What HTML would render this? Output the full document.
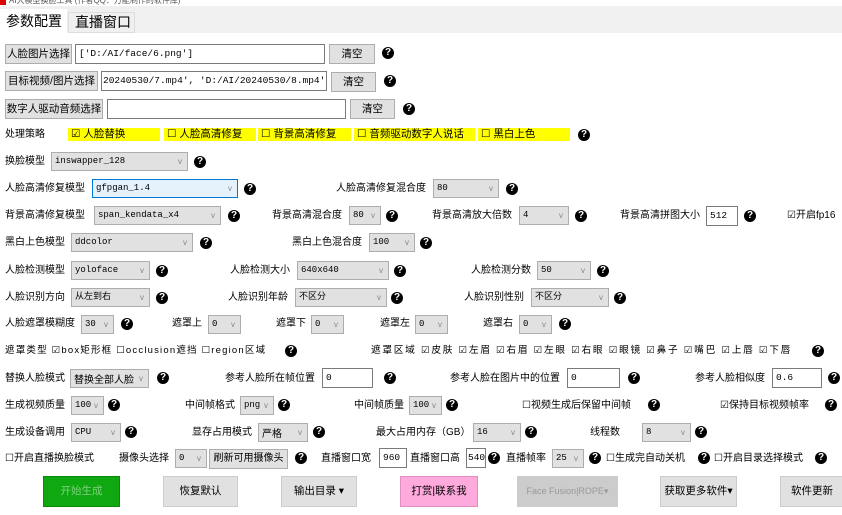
<!DOCTYPE html>
<html><head><meta charset="utf-8"><style>
*{margin:0;padding:0;box-sizing:border-box}
body{width:842px;height:515px;overflow:hidden;background:#fff;position:relative;font-family:"Liberation Sans","Noto Sans CJK SC",sans-serif;font-size:10px;color:#000}
div,span{position:absolute;white-space:nowrap}
.l{line-height:14px;font-size:10px}
.c{height:19px;background:#e1e1e1;border:1px solid #adadad;font-family:"Liberation Mono","Noto Sans CJK SC",monospace;font-size:9px;line-height:17px;padding-left:3px}
.c:after{content:"v";position:absolute;right:5px;top:0;color:#888;font-size:8px;font-family:"Liberation Sans",sans-serif}
.i{height:20px;background:#fff;border:1px solid #7a7a7a;font-family:"Liberation Mono","Noto Sans CJK SC",monospace;font-size:9.5px;line-height:18px;padding-left:3px;overflow:hidden}
.b{height:20px;background:#e1e1e1;border:1px solid #adadad;text-align:center;line-height:18px;font-size:10.5px}
.q{width:12px;height:12px;border-radius:50%;background:#000;color:#fff;font-weight:bold;font-size:10px;line-height:12px;text-align:center}
.y{background:#ff0;height:13px;top:128px;line-height:13px;padding-left:3px;font-size:10.5px}
.B{top:476px;height:31px;background:#e1e1e1;border:1px solid #ccc;text-align:center;line-height:29px;font-size:10.5px}
</style></head><body>
<div style="left:0;top:0;width:842px;height:6px;background:#fff;font-size:8px;line-height:6px;color:#555;overflow:hidden"><span style="left:0;top:0;width:6px;height:5px;background:#d00"></span><span style="left:9px;top:-2px">AI大模型换脸工具 (作者QQ：万能制作的软件库)</span></div>
<div style="left:0;top:6px;width:842px;height:27px;background:#f0f0f0"></div>
<div style="left:0;top:9px;width:67px;height:25px;background:#fff;font-size:14px;line-height:24px;padding-left:6px">参数配置</div>
<div style="left:68px;top:12px;width:67px;height:21px;border:1px solid #ddd;background:#f0f0f0;font-size:14px;line-height:19px;padding-left:6px">直播窗口</div>

<div class="b" style="left:5px;top:44px;width:67px">人脸图片选择</div>
<div class="i" style="left:75px;top:44px;width:250px">['D:/AI/face/6.png']</div>
<div class="b" style="left:329px;top:44px;width:46px">清空</div>
<div class="q" style="left:382px;top:47px">?</div>

<div class="b" style="left:5px;top:71px;width:93px">目标视频/图片选择</div>
<div class="i" style="left:101px;top:71px;width:226px;padding-left:1px">20240530/7.mp4', 'D:/AI/20240530/8.mp4']</div>
<div class="b" style="left:331px;top:72px;width:45px">清空</div>
<div class="q" style="left:384px;top:75px">?</div>

<div class="b" style="left:5px;top:99px;width:98px">数字人驱动音频选择</div>
<div class="i" style="left:107px;top:99px;width:239px"></div>
<div class="b" style="left:350px;top:99px;width:45px">清空</div>
<div class="q" style="left:403px;top:103px">?</div>

<div class="l" style="left:5px;top:128px">处理策略</div>
<div class="y" style="left:68px;width:92px">☑ 人脸替换</div>
<div class="y" style="left:164px;width:92px">☐ 人脸高清修复</div>
<div class="y" style="left:258px;width:93px">☐ 背景高清修复</div>
<div class="y" style="left:354px;width:121px">☐ 音频驱动数字人说话</div>
<div class="y" style="left:478px;width:92px">☐ 黑白上色</div>
<div class="q" style="left:578px;top:129px">?</div>

<div class="l" style="left:5px;top:155px">换脸模型</div>
<div class="c" style="left:51px;top:152px;width:137px">inswapper_128</div>
<div class="q" style="left:194px;top:156px">?</div>

<div class="l" style="left:5px;top:182px">人脸高清修复模型</div>
<div class="c" style="left:92px;top:179px;width:146px;background:#e5f1fb;border-color:#0078d7">gfpgan_1.4</div>
<div class="q" style="left:244px;top:183px">?</div>
<div class="l" style="left:336px;top:182px">人脸高清修复混合度</div>
<div class="c" style="left:433px;top:179px;width:66px">80</div>
<div class="q" style="left:506px;top:183px">?</div>

<div class="l" style="left:5px;top:209px">背景高清修复模型</div>
<div class="c" style="left:94px;top:206px;width:127px">span_kendata_x4</div>
<div class="q" style="left:228px;top:210px">?</div>
<div class="l" style="left:272px;top:209px">背景高清混合度</div>
<div class="c" style="left:349px;top:206px;width:32px">80</div>
<div class="q" style="left:386px;top:210px">?</div>
<div class="l" style="left:432px;top:209px">背景高清放大倍数</div>
<div class="c" style="left:519px;top:206px;width:50px">4</div>
<div class="q" style="left:575px;top:210px">?</div>
<div class="l" style="left:620px;top:209px">背景高清拼图大小</div>
<div class="i" style="left:706px;top:206px;width:32px">512</div>
<div class="q" style="left:744px;top:210px">?</div>
<div class="l" style="left:787px;top:209px">☑开启fp16</div>

<div class="l" style="left:5px;top:236px">黑白上色模型</div>
<div class="c" style="left:71px;top:233px;width:122px">ddcolor</div>
<div class="q" style="left:200px;top:237px">?</div>
<div class="l" style="left:292px;top:236px">黑白上色混合度</div>
<div class="c" style="left:369px;top:233px;width:46px">100</div>
<div class="q" style="left:420px;top:237px">?</div>

<div class="l" style="left:5px;top:264px">人脸检测模型</div>
<div class="c" style="left:71px;top:261px;width:79px">yoloface</div>
<div class="q" style="left:156px;top:265px">?</div>
<div class="l" style="left:230px;top:264px">人脸检测大小</div>
<div class="c" style="left:297px;top:261px;width:92px">640x640</div>
<div class="q" style="left:394px;top:265px">?</div>
<div class="l" style="left:471px;top:264px">人脸检测分数</div>
<div class="c" style="left:537px;top:261px;width:54px">50</div>
<div class="q" style="left:597px;top:265px">?</div>

<div class="l" style="left:5px;top:291px">人脸识别方向</div>
<div class="c" style="left:71px;top:288px;width:79px">从左到右</div>
<div class="q" style="left:156px;top:292px">?</div>
<div class="l" style="left:228px;top:291px">人脸识别年龄</div>
<div class="c" style="left:295px;top:288px;width:92px">不区分</div>
<div class="q" style="left:391px;top:292px">?</div>
<div class="l" style="left:464px;top:291px">人脸识别性别</div>
<div class="c" style="left:531px;top:288px;width:78px">不区分</div>
<div class="q" style="left:614px;top:292px">?</div>

<div class="l" style="left:5px;top:317px">人脸遮罩模糊度</div>
<div class="c" style="left:81px;top:315px;width:33px">30</div>
<div class="q" style="left:121px;top:318px">?</div>
<div class="l" style="left:172px;top:317px">遮罩上</div>
<div class="c" style="left:208px;top:315px;width:33px">0</div>
<div class="l" style="left:276px;top:317px">遮罩下</div>
<div class="c" style="left:311px;top:315px;width:33px">0</div>
<div class="l" style="left:380px;top:317px">遮罩左</div>
<div class="c" style="left:415px;top:315px;width:33px">0</div>
<div class="l" style="left:483px;top:317px">遮罩右</div>
<div class="c" style="left:519px;top:315px;width:33px">0</div>
<div class="q" style="left:559px;top:318px">?</div>

<div class="l" style="left:5px;top:344px;font-size:9.5px;letter-spacing:1.2px">遮罩类型 ☑box矩形框 ☐occlusion遮挡 ☐region区域</div>
<div class="q" style="left:285px;top:345px">?</div>
<div class="l" style="left:371px;top:344px;font-size:9.7px;letter-spacing:1.7px">遮罩区域 ☑皮肤 ☑左眉 ☑右眉 ☑左眼 ☑右眼 ☑眼镜 ☑鼻子 ☑嘴巴 ☑上唇 ☑下唇</div>
<div class="q" style="left:812px;top:345px">?</div>

<div class="l" style="left:5px;top:372px">替换人脸模式</div>
<div class="c" style="left:70px;top:369px;width:79px;font-family:'Noto Sans CJK SC',sans-serif;font-size:10px">替换全部人脸</div>
<div class="q" style="left:157px;top:372px">?</div>
<div class="l" style="left:225px;top:372px">参考人脸所在帧位置</div>
<div class="i" style="left:322px;top:368px;width:51px">0</div>
<div class="q" style="left:384px;top:372px">?</div>
<div class="l" style="left:450px;top:372px">参考人脸在图片中的位置</div>
<div class="i" style="left:567px;top:368px;width:53px">0</div>
<div class="q" style="left:628px;top:372px">?</div>
<div class="l" style="left:695px;top:372px">参考人脸相似度</div>
<div class="i" style="left:772px;top:368px;width:50px">0.6</div>
<div class="q" style="left:828px;top:372px">?</div>

<div class="l" style="left:5px;top:399px">生成视频质量</div>
<div class="c" style="left:71px;top:396px;width:33px">100</div>
<div class="q" style="left:108px;top:399px">?</div>
<div class="l" style="left:185px;top:399px">中间帧格式</div>
<div class="c" style="left:240px;top:396px;width:34px">png</div>
<div class="q" style="left:278px;top:399px">?</div>
<div class="l" style="left:354px;top:399px">中间帧质量</div>
<div class="c" style="left:409px;top:396px;width:33px">100</div>
<div class="q" style="left:446px;top:399px">?</div>
<div class="l" style="left:522px;top:399px">☐视频生成后保留中间帧</div>
<div class="q" style="left:648px;top:399px">?</div>
<div class="l" style="left:720px;top:399px">☑保持目标视频帧率</div>
<div class="q" style="left:825px;top:399px">?</div>

<div class="l" style="left:5px;top:426px">生成设备调用</div>
<div class="c" style="left:71px;top:423px;width:50px">CPU</div>
<div class="q" style="left:125px;top:426px">?</div>
<div class="l" style="left:192px;top:426px">显存占用模式</div>
<div class="c" style="left:258px;top:423px;width:50px;font-family:'Noto Sans CJK SC',sans-serif;font-size:10px">严格</div>
<div class="q" style="left:313px;top:426px">?</div>
<div class="l" style="left:376px;top:426px">最大占用内存（GB）</div>
<div class="c" style="left:473px;top:423px;width:48px">16</div>
<div class="q" style="left:525px;top:426px">?</div>
<div class="l" style="left:590px;top:426px">线程数</div>
<div class="c" style="left:642px;top:423px;width:49px">8</div>
<div class="q" style="left:695px;top:426px">?</div>

<div class="l" style="left:5px;top:452px">☐开启直播换脸模式</div>
<div class="l" style="left:119px;top:452px">摄像头选择</div>
<div class="c" style="left:175px;top:449px;width:32px">0</div>
<div class="b" style="left:209px;top:449px;width:79px;font-size:10px">刷新可用摄像头</div>
<div class="q" style="left:295px;top:452px">?</div>
<div class="l" style="left:321px;top:452px">直播窗口宽</div>
<div class="i" style="left:379px;top:448px;width:28px">960</div>
<div class="l" style="left:410px;top:452px">直播窗口高</div>
<div class="i" style="left:466px;top:448px;width:20px;padding-left:1px">540</div>
<div class="q" style="left:488px;top:452px">?</div>
<div class="l" style="left:506px;top:452px">直播帧率</div>
<div class="c" style="left:552px;top:449px;width:32px">25</div>
<div class="q" style="left:589px;top:452px">?</div>
<div class="l" style="left:606px;top:452px">☐生成完自动关机</div>
<div class="q" style="left:698px;top:452px">?</div>
<div class="l" style="left:714px;top:452px">☐开启目录选择模式</div>
<div class="q" style="left:815px;top:452px">?</div>

<div class="B" style="left:43px;width:77px;background:#10a810;border-color:#0a8a0a;color:#7fd07f">开始生成</div>
<div class="B" style="left:163px;width:75px">恢复默认</div>
<div class="B" style="left:281px;width:76px">输出目录 ▾</div>
<div class="B" style="left:400px;width:78px;background:#ffaadd;border-color:#e090c0">打赏|联系我</div>
<div class="B" style="left:517px;width:101px;background:#cccccc;color:#999;font-size:9px">Face Fusion|ROPE▾</div>
<div class="B" style="left:660px;width:77px">获取更多软件▾</div>
<div class="B" style="left:780px;width:64px">软件更新</div>
</body></html>
